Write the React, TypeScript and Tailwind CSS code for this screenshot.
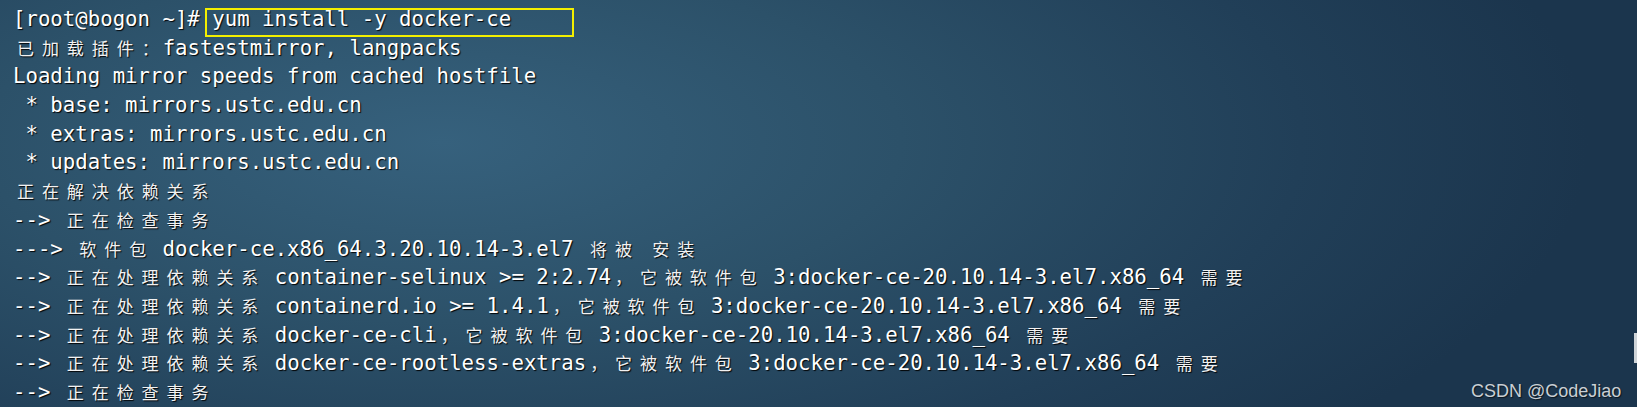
const lines: string[] = [
  "[root@bogon ~]# yum install -y docker-ce",
  "已加载插件：fastestmirror, langpacks",
  "Loading mirror speeds from cached hostfile",
  " * base: mirrors.ustc.edu.cn",
  " * extras: mirrors.ustc.edu.cn",
  " * updates: mirrors.ustc.edu.cn",
  "正在解决依赖关系",
  "--> 正在检查事务",
  "---> 软件包 docker-ce.x86_64.3.20.10.14-3.el7 将被 安装",
  "--> 正在处理依赖关系 container-selinux >= 2:2.74，它被软件包 3:docker-ce-20.10.14-3.el7.x86_64 需要",
  "--> 正在处理依赖关系 containerd.io >= 1.4.1，它被软件包 3:docker-ce-20.10.14-3.el7.x86_64 需要",
  "--> 正在处理依赖关系 docker-ce-cli，它被软件包 3:docker-ce-20.10.14-3.el7.x86_64 需要",
  "--> 正在处理依赖关系 docker-ce-rootless-extras，它被软件包 3:docker-ce-20.10.14-3.el7.x86_64 需要",
  "--> 正在检查事务",
];

const wide = /([\u3000-\u9fff\uff00-\uffef]+)/;

// wide chars take two terminal cells
const TermLine = ({ text }: { text: string }) => {
  const parts = text.split(wide).filter((p) => p.length > 0);
  return (
    <div className="h-[28.7px] whitespace-pre">
      {parts.map((part, i) =>
        wide.test(part) ? (
          part.split("").map((ch, j) => (
            <span
              key={`${i}-${j}`}
              className="inline-block w-[24.94px] text-center font-['Noto_Sans_CJK_SC',sans-serif] text-[17px] text-[#f2f2f2]"
            >
              {ch}
            </span>
          ))
        ) : (
          <span key={i}>{part}</span>
        )
      )}
    </div>
  );
};

export default function App() {
  return (
    <div className="relative h-[407px] w-full overflow-hidden bg-[radial-gradient(ellipse_70%_110%_at_27%_35%,#36617d_0%,#2c5169_40%,#213f58_75%,#1b354d_100%)]">
      <div className="pl-[13px] pt-[5px] font-['DejaVu_Sans_Mono',monospace] text-[20.7px] leading-[28.7px] text-white [text-shadow:1px_1px_1px_rgba(0,0,0,0.95)]">
        {lines.map((l, i) => (
          <TermLine key={i} text={l} />
        ))}
      </div>

      <div className="absolute left-[205px] top-[8px] h-[29px] w-[369px] border-2 border-[#f3ef00]" />

      <div className="absolute right-0 top-[333px] h-[30px] w-[3px] bg-[#cfd4d8]" />

      <div className="absolute left-[1471px] top-[382px] font-['Liberation_Sans',Arial,sans-serif] text-[18px] leading-[18px] text-[#c9cfd4] [text-shadow:1px_1px_1px_rgba(0,0,0,0.6)]">
        CSDN @CodeJiao
      </div>
    </div>
  );
}
